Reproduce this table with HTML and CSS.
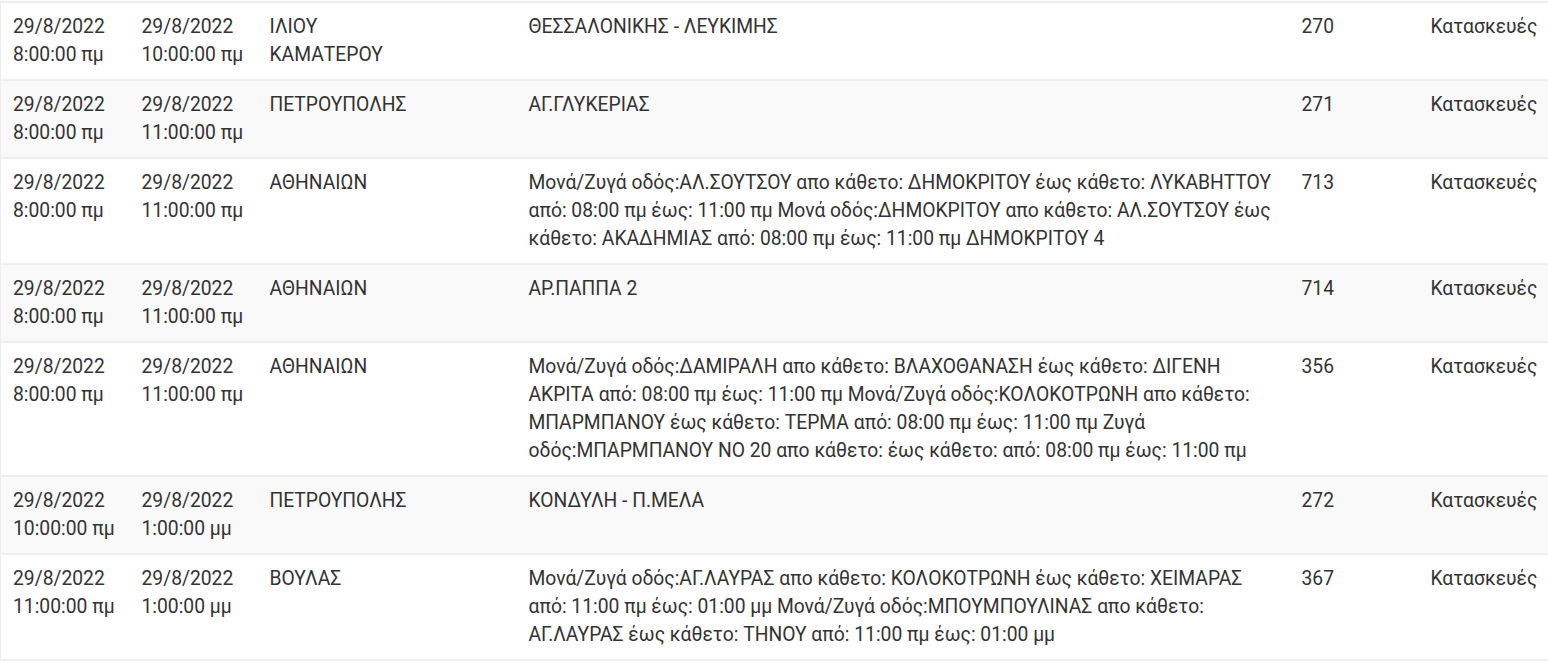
FILE: index.html
```html
<!DOCTYPE html>
<html lang="el">
<head>
    <meta charset="UTF-8">
    <meta name="viewport" content="width=device-width, initial-scale=1.0">
    <title>Διακοπές νερού</title>
    <link rel="stylesheet" href="styles.css">
</head>
<body>

    <table class="outages">
        <colgroup>
            <col class="c-from">
            <col class="c-to">
            <col class="c-area">
            <col class="c-street">
            <col class="c-id">
            <col class="c-type">
        </colgroup>
        <tbody>
            <tr>
                <td>29/8/2022 8:00:00 πμ</td>
                <td>29/8/2022 10:00:00 πμ</td>
                <td class="area">ΙΛΙΟΥ ΚΑΜΑΤΕΡΟΥ</td>
                <td>ΘΕΣΣΑΛΟΝΙΚΗΣ - ΛΕΥΚΙΜΗΣ</td>
                <td>270</td>
                <td>Κατασκευές</td>
            </tr>
            <tr>
                <td>29/8/2022 8:00:00 πμ</td>
                <td>29/8/2022 11:00:00 πμ</td>
                <td class="area">ΠΕΤΡΟΥΠΟΛΗΣ</td>
                <td>ΑΓ.ΓΛΥΚΕΡΙΑΣ</td>
                <td>271</td>
                <td>Κατασκευές</td>
            </tr>
            <tr>
                <td>29/8/2022 8:00:00 πμ</td>
                <td>29/8/2022 11:00:00 πμ</td>
                <td class="area">ΑΘΗΝΑΙΩΝ</td>
                <td>Μονά/Ζυγά οδός:ΑΛ.ΣΟΥΤΣΟΥ απο κάθετο: ΔΗΜΟΚΡΙΤΟΥ έως κάθετο: ΛΥΚΑΒΗΤΤΟΥ από: 08:00 πμ έως: 11:00 πμ Μονά οδός:ΔΗΜΟΚΡΙΤΟΥ απο κάθετο: ΑΛ.ΣΟΥΤΣΟΥ έως κάθετο: ΑΚΑΔΗΜΙΑΣ από: 08:00 πμ έως: 11:00 πμ ΔΗΜΟΚΡΙΤΟΥ 4</td>
                <td>713</td>
                <td>Κατασκευές</td>
            </tr>
            <tr>
                <td>29/8/2022 8:00:00 πμ</td>
                <td>29/8/2022 11:00:00 πμ</td>
                <td class="area">ΑΘΗΝΑΙΩΝ</td>
                <td>ΑΡ.ΠΑΠΠΑ 2</td>
                <td>714</td>
                <td>Κατασκευές</td>
            </tr>
            <tr>
                <td>29/8/2022 8:00:00 πμ</td>
                <td>29/8/2022 11:00:00 πμ</td>
                <td class="area">ΑΘΗΝΑΙΩΝ</td>
                <td>Μονά/Ζυγά οδός:ΔΑΜΙΡΑΛΗ απο κάθετο: ΒΛΑΧΟΘΑΝΑΣΗ έως κάθετο: ΔΙΓΕΝΗ ΑΚΡΙΤΑ από: 08:00 πμ έως: 11:00 πμ Μονά/Ζυγά οδός:ΚΟΛΟΚΟΤΡΩΝΗ απο κάθετο: ΜΠΑΡΜΠΑΝΟΥ έως κάθετο: ΤΕΡΜΑ από: 08:00 πμ έως: 11:00 πμ Ζυγά οδός:ΜΠΑΡΜΠΑΝΟΥ ΝΟ 20 απο κάθετο: έως κάθετο: από: 08:00 πμ έως: 11:00 πμ</td>
                <td>356</td>
                <td>Κατασκευές</td>
            </tr>
            <tr>
                <td>29/8/2022 10:00:00 πμ</td>
                <td>29/8/2022 1:00:00 μμ</td>
                <td class="area">ΠΕΤΡΟΥΠΟΛΗΣ</td>
                <td>ΚΟΝΔΥΛΗ - Π.ΜΕΛΑ</td>
                <td>272</td>
                <td>Κατασκευές</td>
            </tr>
            <tr>
                <td>29/8/2022 11:00:00 πμ</td>
                <td>29/8/2022 1:00:00 μμ</td>
                <td class="area">ΒΟΥΛΑΣ</td>
                <td>Μονά/Ζυγά οδός:ΑΓ.ΛΑΥΡΑΣ απο κάθετο: ΚΟΛΟΚΟΤΡΩΝΗ έως κάθετο: ΧΕΙΜΑΡΑΣ από: 11:00 πμ έως: 01:00 μμ Μονά/Ζυγά οδός:ΜΠΟΥΜΠΟΥΛΙΝΑΣ απο κάθετο: ΑΓ.ΛΑΥΡΑΣ έως κάθετο: ΤΗΝΟΥ από: 11:00 πμ έως: 01:00 μμ</td>
                <td>367</td>
                <td>Κατασκευές</td>
            </tr>
        </tbody>
    </table>

</body>
</html>
```

FILE: styles.css
```css
body {
    margin: 0;
    padding-top: 1px;
    background-color: #ffffff;
    font-family: Roboto, "Noto Sans", sans-serif;
    font-size: 19.3px;
    color: #333;
}

.outages {
    width: 1548px;
    border-collapse: collapse;
    table-layout: fixed;
    border-left: 1px solid #eee;
}

.c-from { width: 129px; }
.c-to { width: 128px; }
.c-area { width: 259px; }
.c-street { width: 773px; }
.c-id { width: 129px; }
.c-type { width: 130px; }

.outages td {
    padding: 10px 12px 10px 12px;
    line-height: 28px;
    vertical-align: top;
    text-align: left;
    border-top: 2px solid #eee;
}

.outages td.area {
    padding-right: 90px;
}

.outages tr:last-child td {
    border-bottom: 2px solid #eee;
}

.outages tr:nth-child(even) td {
    background: #f9f9f9;
}
```
